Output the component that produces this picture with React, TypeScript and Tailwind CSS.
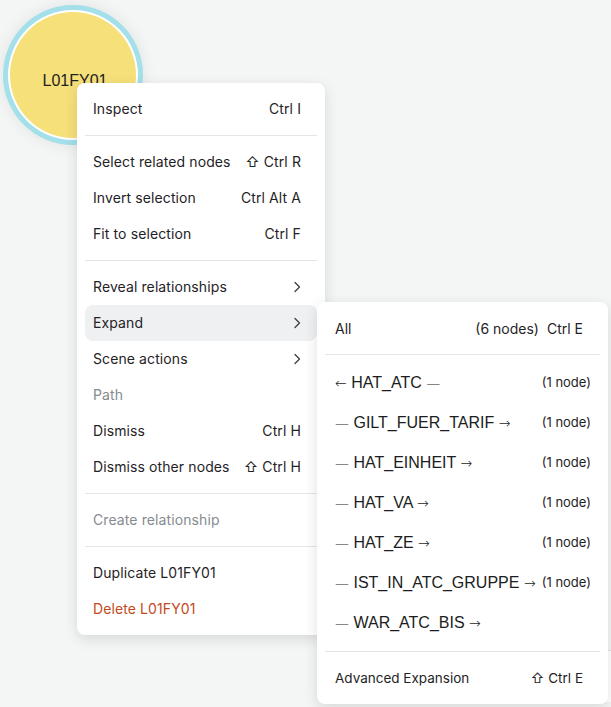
import React from 'react';

type Item =
  | { kind: 'item'; label: string; shortcut?: string; sub?: boolean; muted?: boolean; danger?: boolean; active?: boolean }
  | { kind: 'sep' };

const mainItems: Item[] = [
  { kind: 'item', label: 'Inspect', shortcut: 'Ctrl I' },
  { kind: 'sep' },
  { kind: 'item', label: 'Select related nodes', shortcut: '⇧ Ctrl R' },
  { kind: 'item', label: 'Invert selection', shortcut: 'Ctrl Alt A' },
  { kind: 'item', label: 'Fit to selection', shortcut: 'Ctrl F' },
  { kind: 'sep' },
  { kind: 'item', label: 'Reveal relationships', sub: true },
  { kind: 'item', label: 'Expand', sub: true, active: true },
  { kind: 'item', label: 'Scene actions', sub: true },
  { kind: 'item', label: 'Path', muted: true },
  { kind: 'item', label: 'Dismiss', shortcut: 'Ctrl H' },
  { kind: 'item', label: 'Dismiss other nodes', shortcut: '⇧ Ctrl H' },
  { kind: 'sep' },
  { kind: 'item', label: 'Create relationship', muted: true },
  { kind: 'sep' },
  { kind: 'item', label: 'Duplicate L01FY01' },
  { kind: 'item', label: 'Delete L01FY01', danger: true },
];

const relations = [
  { left: '←', name: 'HAT_ATC', right: '—', count: '(1 node)' },
  { left: '—', name: 'GILT_FUER_TARIF', right: '→', count: '(1 node)' },
  { left: '—', name: 'HAT_EINHEIT', right: '→', count: '(1 node)' },
  { left: '—', name: 'HAT_VA', right: '→', count: '(1 node)' },
  { left: '—', name: 'HAT_ZE', right: '→', count: '(1 node)' },
  { left: '—', name: 'IST_IN_ATC_GRUPPE', right: '→', count: '(1 node)' },
  { left: '—', name: 'WAR_ATC_BIS', right: '→', count: '' },
];

const Chevron = () => (
  <svg width="16" height="16" viewBox="0 0 16 16" fill="none" className="text-[#3b3f44]">
    <path d="M6 3.5 10.5 8 6 12.5" stroke="currentColor" strokeWidth="1.3" strokeLinecap="round" strokeLinejoin="round" />
  </svg>
);

const Sep = () => <div className="my-2 h-px bg-[#e3e5e7]" />;

export default function App() {
  return (
    <div
      className="relative w-[611px] h-[707px] overflow-hidden bg-[#f4f5f5]"
      style={{ fontFamily: 'Inter, "Liberation Sans", sans-serif' }}
    >
      {/* node on the canvas */}
      <div className="absolute left-[3px] top-[5px] w-[140px] h-[140px] rounded-full bg-[#a3e0e9] p-[5px] shadow-[0_0_16px_rgba(0,0,0,0.08)]">
        <div className="w-full h-full rounded-full bg-white p-[2px]">
          <div className="w-full h-full rounded-full bg-[#f6e07a] flex items-center justify-center pt-[12px] pl-[4px]">
            <span className="text-[16px] text-[#222]" style={{ fontFamily: '"Liberation Sans", Arial, sans-serif' }}>
              L01FY01
            </span>
          </div>
        </div>
      </div>

      {/* context menu */}
      <div className="absolute left-[77px] top-[83px] w-[248px] rounded-lg bg-white p-2 shadow-[0_4px_14px_rgba(0,0,0,0.12)] text-[14px] tracking-[0.1px] text-[#1f2326]">
        {mainItems.map((it, i) =>
          it.kind === 'sep' ? (
            <Sep key={i} />
          ) : (
            <div
              key={i}
              className={`h-9 flex items-center justify-between pl-2 pr-4 pb-px rounded-lg ${it.active ? 'bg-[#eff0f1]' : ''} ${
                it.muted ? 'text-[#868b90]' : it.danger ? 'text-[#c24a1e]' : ''
              }`}
            >
              <span>{it.label}</span>
              {it.shortcut && <span>{it.shortcut}</span>}
              {it.sub && (
                <span className="-mr-1">
                  <Chevron />
                </span>
              )}
            </div>
          )
        )}
      </div>

      {/* faint panel behind submenu */}
      <div className="absolute left-[602px] top-[650px] w-[40px] h-[52px] border-l border-t border-[#e3e5e7] bg-white" />

      {/* expand submenu */}
      <div className="absolute left-[317px] top-[302px] w-[291px] rounded-lg bg-white p-2 shadow-[0_4px_14px_rgba(0,0,0,0.12)] text-[14px] text-[#1f2326]">
        <div className="h-9 flex items-center justify-between pl-[10px] pr-[17px]">
          <span>All</span>
          <span>
            (6 nodes)<span className="ml-2">Ctrl E</span>
          </span>
        </div>
        <Sep />
        {relations.map((r) => (
          <div key={r.name} className="h-10 flex items-center justify-between pl-[10px] pr-[9px]">
            <span className="text-[16px] text-[#1b1d20]" style={{ fontFamily: '"Liberation Sans", Arial, sans-serif' }}>
              <span style={{ fontFamily: '"DejaVu Sans", sans-serif' }} className="text-[14px] font-extralight">{r.left}</span>{' '}
              {r.name}{' '}
              <span style={{ fontFamily: '"DejaVu Sans", sans-serif' }} className="text-[14px] font-extralight">{r.right}</span>
            </span>
            <span className="text-[13px] shrink-0">{r.count}</span>
          </div>
        ))}
        <Sep />
        <div className="h-9 flex items-center justify-between pl-[10px] pr-[17px] text-[13.5px]">
          <span>Advanced Expansion</span>
          <span>⇧ Ctrl E</span>
        </div>
      </div>
    </div>
  );
}
